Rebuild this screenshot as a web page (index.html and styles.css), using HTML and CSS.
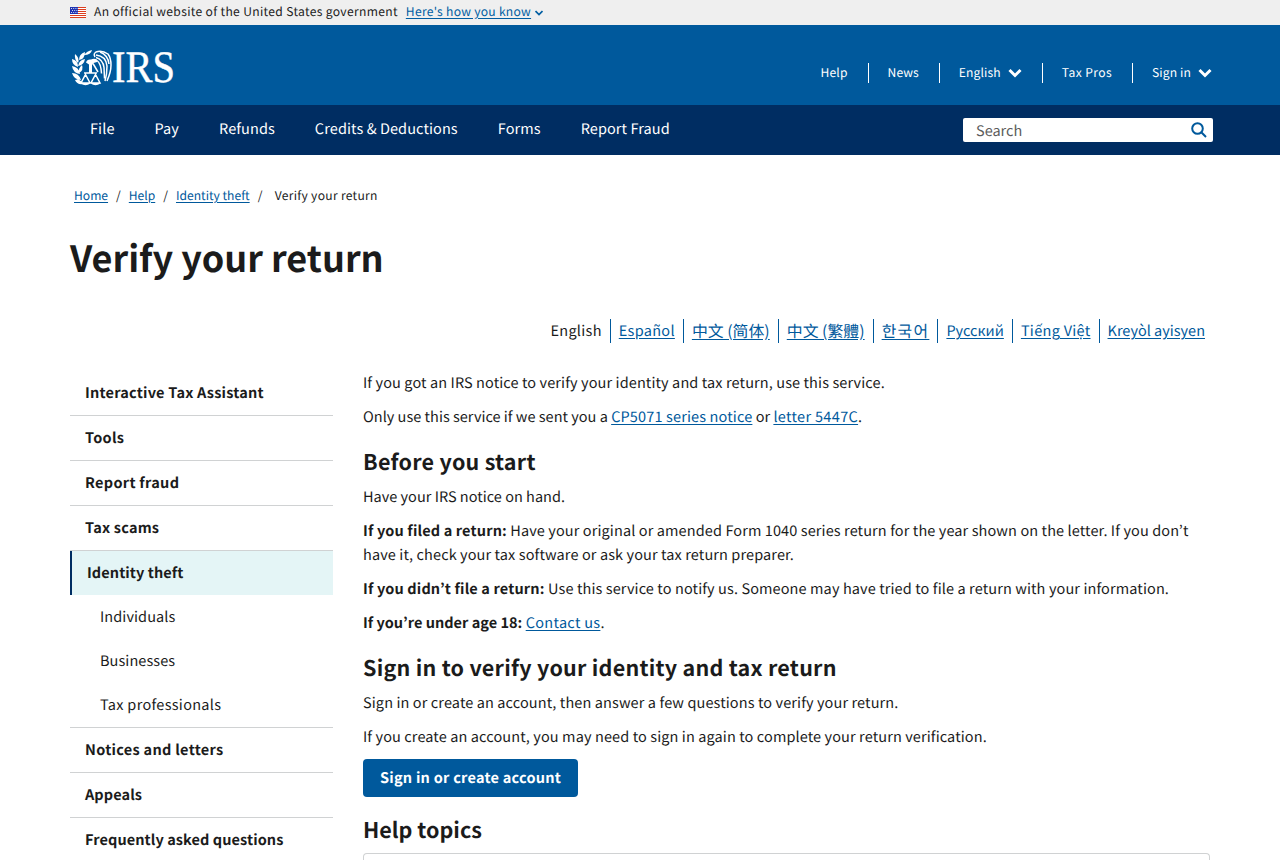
FILE: index.html
```
<!DOCTYPE html>
<html lang="en">
  <head>
    <meta charset="UTF-8" />
    <meta name="viewport" content="width=device-width, initial-scale=1.0" />
    <title>Verify your return | Internal Revenue Service</title>
    <link rel="stylesheet" href="styles.css">
  </head>
  <body>
    <div class="banner">
      <div class="container banner-inner">
        <svg class="flag" width="16" height="11" viewBox="0 0 16 11">
          <rect width="16" height="11" fill="#fff" />
          <path d="M0 .5h16M0 2.5h16M0 4.5h16M0 6.5h16M0 8.5h16M0 10.5h16" stroke="#db3e1f" />
          <rect width="8" height="7" fill="#1e33b1" />
          <path d="M1 1.5h7M2 3.5h6M1 5.5h7" stroke="#fff" stroke-width=".8" stroke-dasharray="1 1.200" />
        </svg>
        <span class="banner-text">An official website of the United States government</span>
        <a class="banner-link" href="#">Here's how you know</a>
        <svg class="banner-arrow" width="8" height="6" viewBox="0 0 8 6"><path d="M.5 1L4 4.500 7.500 1" fill="none" stroke="#005ea2" stroke-width="1.700" /></svg>
      </div>
    </div>
    <header class="header">
      <div class="container header-inner">
        <a class="logo" href="#">
          <svg width="106" height="38" viewBox="0 0 106 38">
            <g fill="#fff">
              <path d="M2 10q6 1 6 8-6-2-6-8zM2 17q7 1 8 8-7-1-8-8zM2 24q7 0 9 7-7 0-9-7zM5 31q5-2 8 4-6 1-8-4zM5 5q5 4 3 9-4-4-3-9zM9 11q0-6 6-8 0 7-6 8zM14 6q3-4 8-5-1 5-8 5zM8 17q1-6 7-7-1 6-7 7zM9 24q-1-5 3-8 2 5-3 8z" />
              <path d="M16 13.500q1-3.500 5-3 3-1.500 6 0v2.500l-3.500 1-1.500 2V24h-3v-8.500z" />
            </g>
            <g fill="none" stroke="#fff" stroke-width="1.500">
              <path d="M14 24h13M15.500 25.500L11 34h9zM25.500 25.500L21 34h9zM11 34q4.500 3 9 0M21 34q4.500 3 9 0" />
              <path d="M25 8q-2-3 1-5 6-2 12 2 3 4 3 11t-4 16" />
              <path d="M26 6q10 1 11 11 0 8-2 15" />
              <path d="M26 8.500q7 2 8 10l.5 11" />
              <path d="M27 11.500q4 3 4.500 13M23 14.500l5 8.500" />
              <path d="M30 3q8 3 9 12" />
            </g>
            <text class="logo-text" x="42" y="33" textLength="63" lengthAdjust="spacingAndGlyphs">IRS</text>
          </svg>
        </a>
        <ul class="top-links">
          <li><a href="#">Help</a></li>
          <li><a href="#">News</a></li>
          <li><a href="#">English</a><svg width="14" height="10" viewBox="0 0 14 10"><path d="M1.500 2L7 7.500 12.500 2" /></svg></li>
          <li><a class="wide" href="#">Tax Pros</a></li>
          <li><a href="#">Sign in</a><svg width="14" height="10" viewBox="0 0 14 10"><path d="M1.500 2L7 7.500 12.500 2" /></svg></li>
        </ul>
      </div>
    </header>
    <nav class="nav">
      <div class="container nav-inner">
        <ul class="menu">
          <li><a href="#">File</a></li>
          <li><a href="#">Pay</a></li>
          <li><a href="#">Refunds</a></li>
          <li><a href="#">Credits &amp; Deductions</a></li>
          <li><a href="#">Forms</a></li>
          <li><a href="#">Report Fraud</a></li>
        </ul>
        <div class="search">
          <span>Search</span>
          <svg width="16" height="16" viewBox="0 0 16 16"><circle cx="6.500" cy="6.500" r="5.300" /><path d="M10.300 10.300L15 15" /></svg>
        </div>
      </div>
    </nav>
    <div class="container">
      <ol class="breadcrumb">
        <li><a href="#">Home</a></li>
        <li><a href="#">Help</a></li>
        <li><a href="#">Identity theft</a></li>
        <li class="current">Verify your return</li>
      </ol>
      <h1>Verify your return</h1>
      <ul class="languages">
        <li class="wide">English</li>
        <li><a class="wide" href="#">Español</a></li>
        <li><a href="#" lang="zh-Hans">中文 (简体)</a></li>
        <li><a href="#" lang="zh-Hant">中文 (繁體)</a></li>
        <li><a href="#" lang="ko">한국어</a></li>
        <li><a href="#">Русский</a></li>
        <li><a class="wide" href="#">Tiếng Việt</a></li>
        <li><a href="#">Kreyòl ayisyen</a></li>
      </ul>
      <div class="columns">
        <ul class="sidebar">
          <li>Interactive Tax Assistant</li>
          <li class="wide">Tools</li>
          <li class="wide">Report fraud</li>
          <li>Tax scams</li>
          <li class="active tight">Identity theft</li>
          <li class="sub tight">Individuals</li>
          <li class="sub tight">Businesses</li>
          <li class="sub last wide">Tax professionals</li>
          <li class="wide">Notices and letters</li>
          <li class="tight">Appeals</li>
          <li class="tight">Frequently asked questions</li>
        </ul>
        <main class="content">
          <p>If you got an IRS notice to verify your identity and tax return, use this service.</p>
          <p class="tight">Only use this service if we sent you a <a href="#">CP5071 series notice</a> or <a class="wide" href="#">letter 5447C</a>.</p>
          <h2>Before you start</h2>
          <p class="tight">Have your IRS notice on hand.</p>
          <p><b>If you filed a return:</b> Have your original or amended Form 1040 series return for the year shown on the letter. If you don’t have it, check your tax software or ask your tax return preparer.</p>
          <p><b>If you didn’t file a return:</b> Use this service to notify us. Someone may have tried to file a return with your information.</p>
          <p><b class="tight">If you’re under age 18:</b> <a class="wide" href="#">Contact us</a>.</p>
          <h2>Sign in to verify your identity and tax return</h2>
          <p>Sign in or create an account, then answer a few questions to verify your return.</p>
          <p>If you create an account, you may need to sign in again to complete your return verification.</p>
          <a class="button" href="#">Sign in or create account</a>
          <h2 class="tight">Help topics</h2>
          <div class="topics"></div>
        </main>
      </div>
    </div>
  </body>
</html>
```
FILE: styles.css
```
* {
  box-sizing: border-box;
}
body {
  margin: 0;
  height: 860px;
  overflow: hidden;
  font-family: "Noto Sans CJK KR", "Noto Sans", sans-serif;
  font-size: 14.5px;
  line-height: 24px;
  color: #1b1b1b;
  background-color: #fff;
  text-rendering: geometricPrecision;
}
ul,
ol {
  margin: 0;
  padding: 0;
  list-style: none;
}
a {
  color: #00599c;
  text-underline-offset: 2px;
}
.container {
  width: 1140px;
  margin: 0 auto;
}
.banner {
  height: 25px;
  background-color: #efefef;
}
.banner-inner {
  display: flex;
  align-items: center;
  height: 24px;
  font-size: 12.1px;
  letter-spacing: 0.33px;
}
.banner-text {
  margin: 0 8px;
}
.banner-link {
  color: #005ea2;
  letter-spacing: 0.28px;
}
.banner-arrow {
  margin: 2px 0 0 4px;
}
.header {
  height: 80px;
  background-color: #00599c;
}
.header-inner {
  display: flex;
  justify-content: space-between;
}
.logo {
  display: block;
  height: 38px;
  margin-top: 24px;
  line-height: 38px;
}
.logo svg {
  display: block;
  overflow: visible;
}
.logo-text {
  font-family: "Liberation Serif", serif;
  font-size: 45px;
  fill: #fff;
  stroke: #fff;
  stroke-width: 0.4;
}
.top-links {
  display: flex;
  margin: 38px -2px 0 0;
  font-size: 12.1px;
  line-height: 20px;
  letter-spacing: 0.12px;
}
.top-links li {
  display: flex;
  align-items: center;
  height: 20px;
  padding: 0 20px 0 19px;
  border-left: 1px solid #fff;
}
.top-links li:first-child {
  border-left: 0;
}
.top-links li:last-child {
  padding-right: 0;
}
.top-links a,
.menu a {
  color: #fff;
  text-decoration: none;
}
.top-links svg {
  margin-left: 7px;
  fill: none;
  stroke: #fff;
  stroke-width: 3;
}
.top-links .wide {
  letter-spacing: 0.4px;
}
.nav {
  height: 50px;
  background-color: #002d62;
}
.nav-inner,
.menu {
  display: flex;
}
.nav-inner {
  justify-content: space-between;
}
.menu {
  gap: 40px;
  padding: 12px 20px;
  letter-spacing: 0.09px;
}
.search {
  display: flex;
  justify-content: space-between;
  align-items: center;
  width: 250px;
  height: 24px;
  margin: 13px -3px 0 0;
  padding: 0 6px 0 13px;
  border-radius: 2px;
  background-color: #fff;
  color: #5c5c5c;
}
.search span {
  padding-top: 2px;
}
.search svg {
  margin-top: -1px;
  fill: none;
  stroke: #00599c;
  stroke-width: 2;
}
.breadcrumb {
  display: flex;
  margin-top: 31px;
  padding-left: 4px;
  font-size: 12.1px;
  line-height: 20px;
}
.breadcrumb li + li::before {
  content: "/";
  padding: 0 8px;
}
.breadcrumb .current {
  letter-spacing: 0.29px;
}
.breadcrumb .current::before {
  padding-right: 12px;
}
h1,
h2 {
  font-weight: 700;
}
h1 {
  margin: 29px 0 0;
  font-size: 36px;
  line-height: 44px;
}
.languages {
  display: flex;
  justify-content: flex-end;
  height: 24px;
  margin-top: 40px;
  padding-right: 5px;
}
.languages li {
  padding-left: 8px;
}
.languages li:not(:last-child) {
  padding-right: 8px;
  border-right: 1px solid #00599c;
}
.languages [lang] {
  font-family: "Noto Sans CJK SC", sans-serif;
  font-size: 15.9px;
}
.languages [lang="zh-Hant"] {
  font-family: "Noto Sans CJK TC", sans-serif;
}
.languages [lang="ko"] {
  font-family: "Noto Sans CJK KR", sans-serif;
  letter-spacing: 1.3px;
}
.columns {
  display: grid;
  grid-template-columns: 263px 847px;
  gap: 30px;
  margin-top: 28px;
}
.sidebar li {
  height: 45px;
  padding-left: 15px;
  border-bottom: 1px solid #d0d2d3;
  font-weight: 700;
  line-height: 44px;
  letter-spacing: 0.21px;
}
.sidebar .active {
  height: 44px;
  border-bottom: 0;
  border-left: 2px solid #002d62;
  background-color: #e4f5f6;
}
.sidebar .sub {
  height: 44px;
  padding-left: 30px;
  border-bottom: 0;
  font-weight: 400;
}
.sidebar .last {
  height: 45px;
  border-bottom: 1px solid #d0d2d3;
}
.content p {
  margin: 0 0 10px;
  letter-spacing: 0.11px;
}
.content b {
  letter-spacing: 0.15px;
}
.content h2 {
  margin: 20px 0 10px;
  font-size: 21.5px;
  line-height: 26px;
  letter-spacing: 0.25px;
}
.button {
  display: inline-block;
  height: 38px;
  padding: 0 17px;
  border-radius: 4px;
  background-color: #00599c;
  color: #fff;
  font-weight: 700;
  line-height: 38px;
  letter-spacing: 0.25px;
  text-decoration: none;
  vertical-align: top;
}
.topics {
  height: 7px;
  border: 1px solid #d0d2d3;
  border-bottom: 0;
  border-radius: 4px 4px 0 0;
}
.wide,
.sidebar .wide {
  letter-spacing: 0.3px;
}
.sidebar .tight {
  letter-spacing: 0.08px;
}
.content .tight {
  letter-spacing: 0.02px;
}
.content .tight a {
  letter-spacing: 0.15px;
}
.content .tight .wide {
  letter-spacing: 0.33px;
}
```
